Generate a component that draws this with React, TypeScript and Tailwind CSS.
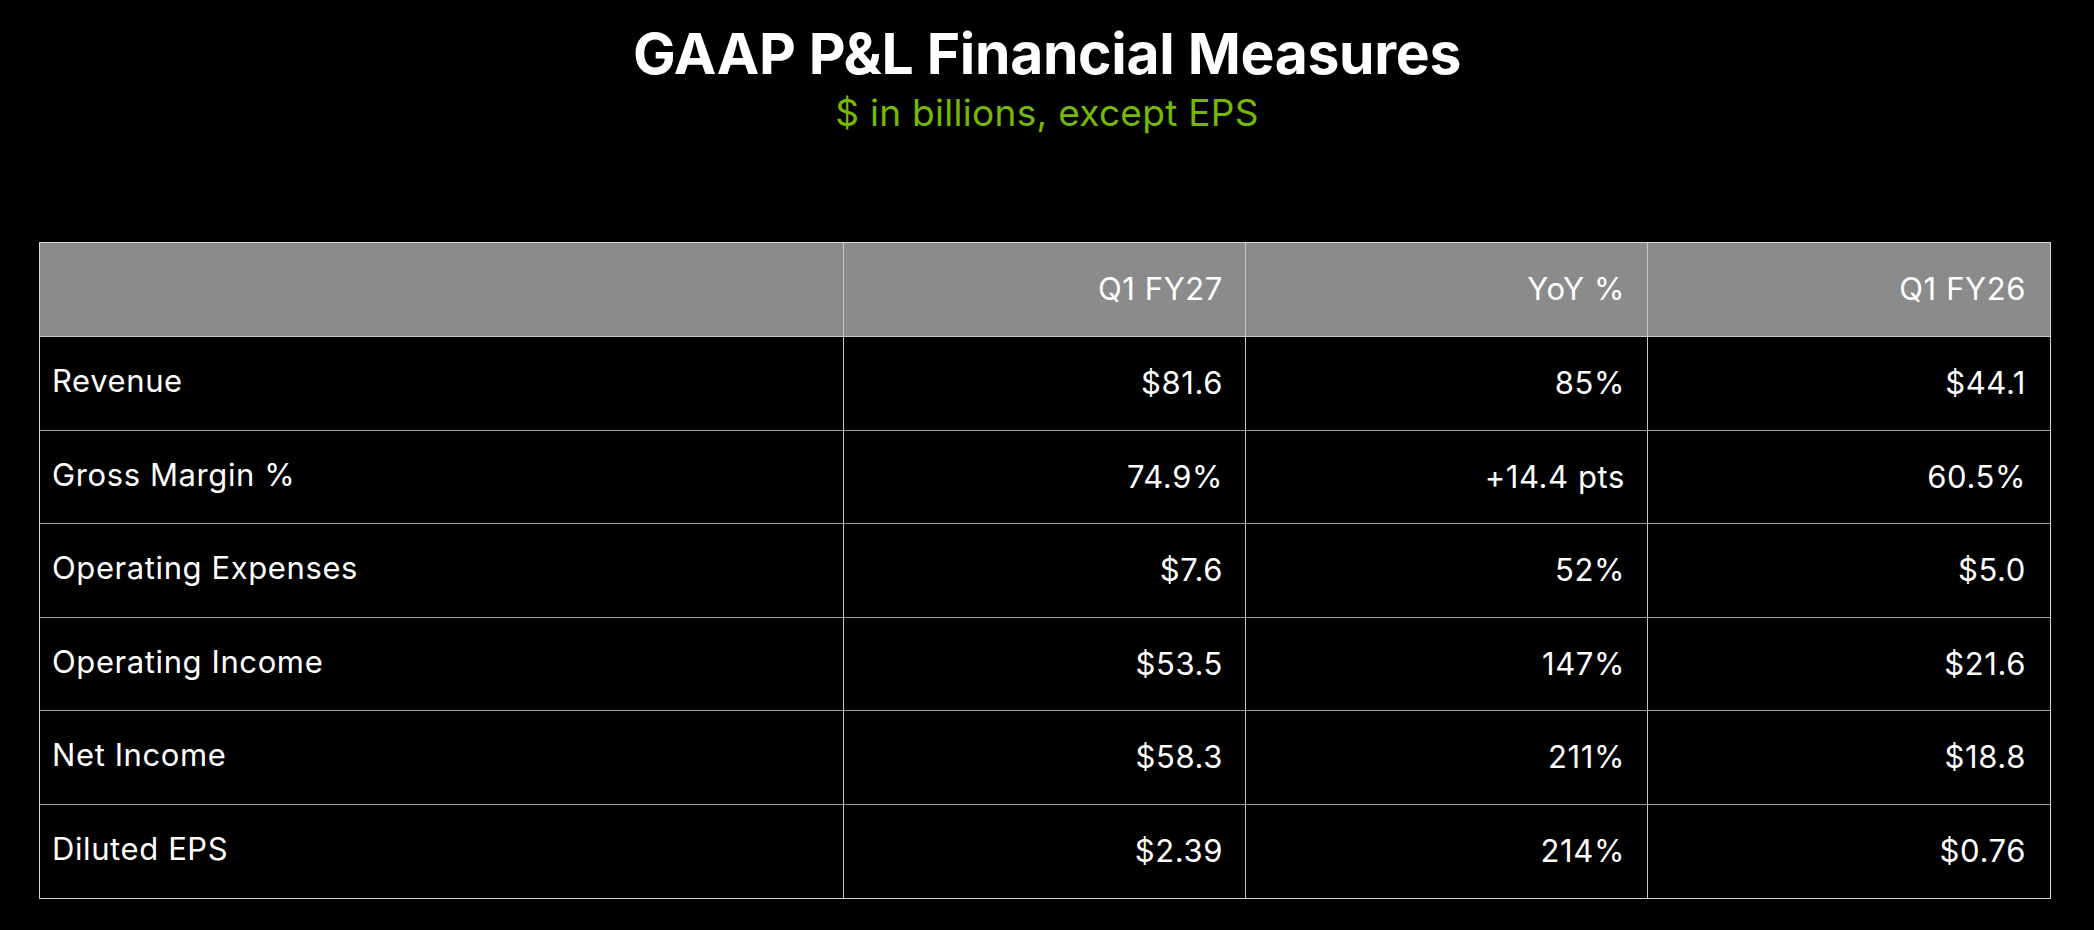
const rows = [
  { label: "Revenue", current: "$81.6", yoy: "85%", prior: "$44.1" },
  { label: "Gross Margin %", current: "74.9%", yoy: "+14.4 pts", prior: "60.5%" },
  { label: "Operating Expenses", current: "$7.6", yoy: "52%", prior: "$5.0" },
  { label: "Operating Income", current: "$53.5", yoy: "147%", prior: "$21.6" },
  { label: "Net Income", current: "$58.3", yoy: "211%", prior: "$18.8" },
  { label: "Diluted EPS", current: "$2.39", yoy: "214%", prior: "$0.76" },
];

const cols = "grid grid-cols-[804px_402px_402px_402px]";

export default function App() {
  return (
    <div className="min-h-[930px] w-[2094px] bg-black text-white font-['Inter',sans-serif]">
      {/* Title */}
      <div className="flex flex-col items-center pt-[20px]">
        <h1 className="text-[57px] font-bold leading-[68px] tracking-[-0.3px]">
          GAAP P&amp;L Financial Measures
        </h1>
        <p className="mt-[3px] text-[37px] leading-[44px] tracking-[0.3px] text-[#76b900]">
          $ in billions, except EPS
        </p>
      </div>

      {/* Table */}
      <div className="ml-[39px] mt-[107px] w-[2012px] border border-[#d4d4d4] text-[31px] tracking-[0.6px]">
        <div className={`${cols} h-[94px] bg-[#8b8b8b] border-b border-[#c8c8c8]`}>
          <div className="border-r border-[#c8c8c8]" />
          <div className="flex items-center justify-end pr-[22px] border-r border-[#c8c8c8]">Q1 FY27</div>
          <div className="flex items-center justify-end pr-[22px] border-r border-[#c8c8c8]">YoY %</div>
          <div className="flex items-center justify-end pr-[24px]">Q1 FY26</div>
        </div>
        {rows.map((r, i) => (
          <div
            key={r.label}
            className={`${cols} ${i % 2 === 0 ? "h-[94px]" : "h-[93px]"} ${
              i < rows.length - 1 ? "border-b border-[#9a9a9a]" : ""
            }`}
          >
            <div className="flex items-center pl-3 pb-1 border-r border-[#c8c8c8]">{r.label}</div>
            <div className="flex items-center justify-end pr-[22px] border-r border-[#c8c8c8]">{r.current}</div>
            <div className="flex items-center justify-end pr-[22px] border-r border-[#c8c8c8]">{r.yoy}</div>
            <div className="flex items-center justify-end pr-[24px]">{r.prior}</div>
          </div>
        ))}
      </div>
    </div>
  );
}
